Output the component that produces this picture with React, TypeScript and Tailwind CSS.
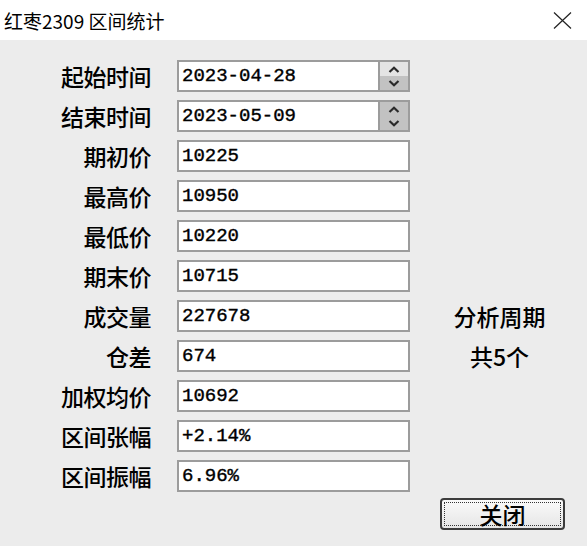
import React from "react";

const rows: { label: string; value: string; spin?: "hover" | "plain" }[] = [
  { label: "起始时间", value: "2023-04-28", spin: "hover" },
  { label: "结束时间", value: "2023-05-09", spin: "plain" },
  { label: "期初价", value: "10225" },
  { label: "最高价", value: "10950" },
  { label: "最低价", value: "10220" },
  { label: "期末价", value: "10715" },
  { label: "成交量", value: "227678" },
  { label: "仓差", value: "674" },
  { label: "加权均价", value: "10692" },
  { label: "区间张幅", value: "+2.14%" },
  { label: "区间振幅", value: "6.96%" },
];

const side: Record<number, string> = { 6: "分析周期", 7: "共5个" };

function Chevron({ up }: { up?: boolean }) {
  return (
    <svg width="12" height="7" viewBox="0 0 12 7" className="block">
      <path
        d={up ? "M1.5 6 L6 1.8 L10.5 6" : "M1.5 1 L6 5.2 L10.5 1"}
        fill="none"
        stroke="#2a2a2a"
        strokeWidth="2.2"
      />
    </svg>
  );
}

function Spinner({ hover }: { hover: boolean }) {
  return (
    <div className="flex w-[30px] flex-col border-l-2 border-[#9c9c9c]">
      <div
        className={`flex flex-1 items-center justify-center ${
          hover ? "bg-[#e4e4e4]" : "bg-[#c2c2c2]"
        }`}
      >
        <Chevron up />
      </div>
      <div className="flex flex-1 items-center justify-center bg-[#c2c2c2]">
        <Chevron />
      </div>
    </div>
  );
}

export default function App() {
  return (
    <div
      className="flex h-[546px] w-[587px] flex-col bg-[#ececec] text-black"
      style={{ fontFamily: "'Noto Sans CJK SC', 'Liberation Sans', sans-serif" }}
    >
      {/* 标题栏 */}
      <div className="flex h-[40px] items-center justify-between bg-white pl-[4px] pr-[15px]">
        <span className="text-[19px] leading-none">红枣2309 区间统计</span>
        <svg width="19" height="17" viewBox="0 0 19 17">
          <path d="M1 0.5 L18 16.5 M18 0.5 L1 16.5" stroke="#222" strokeWidth="1.2" />
        </svg>
      </div>

      {/* 表单 */}
      <div className="flex flex-col gap-2 pt-5">
        {rows.map((r, i) => (
          <div key={r.label} className="flex h-8 items-center">
            <div className="w-[151px] text-right text-[23px] font-medium leading-none tracking-[-0.5px]">
              {r.label}
            </div>
            <div className="ml-[26px] flex h-8 w-[233px] border-2 border-[#9c9c9c] bg-white">
              <div
                className="flex flex-1 items-center pl-[3px] text-[19px] leading-none"
                style={{ fontFamily: "'Liberation Mono', monospace", WebkitTextStroke: "0.4px black" }}
              >
                {r.value}
              </div>
              {r.spin && <Spinner hover={r.spin === "hover"} />}
            </div>
            <div className="flex-1 pl-[2px] text-center text-[23px] font-medium leading-none">
              {side[i] ?? ""}
            </div>
          </div>
        ))}
      </div>

      {/* 按钮 */}
      <div className="flex justify-end pr-[22px] pt-[6px]">
        <button className="flex h-8 w-[125px] items-center justify-center rounded-[4px] border-2 border-[#3c3c3c] bg-gradient-to-b from-[#fafafa] to-[#e6e6e6] p-[2px]">
          <span className="flex h-full w-full items-center justify-center border border-dotted border-[#333] text-[23px] font-medium leading-none">
            关闭
          </span>
        </button>
      </div>
    </div>
  );
}
